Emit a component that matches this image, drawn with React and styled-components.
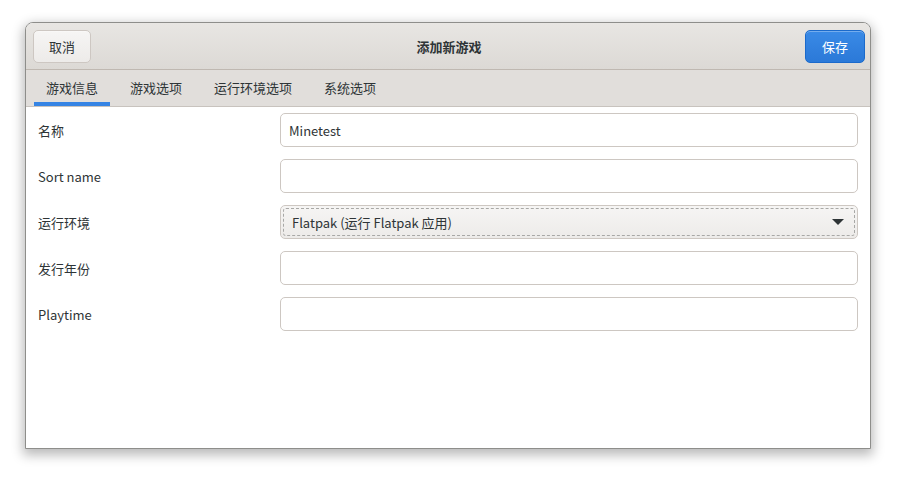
import React from 'react';
import styled, { createGlobalStyle } from 'styled-components';

const Global = createGlobalStyle`
  html, body {
    margin: 0;
    background: #ffffff;
  }
  body {
    font-family: "Noto Sans CJK SC", "Noto Sans", sans-serif;
    font-size: 13px;
    color: #2e3436;
  }
`;

const Page = styled.div`
  width: 897px;
  height: 477px;
  padding: 22px 0 0 25px;
  box-sizing: border-box;
`;

const Window = styled.div`
  width: 846px;
  height: 427px;
  box-sizing: border-box;
  border: 1px solid #8e8e8b;
  border-radius: 8px 8px 0 0;
  background: #ffffff;
  box-shadow: 0 4px 12px 2px rgba(0, 0, 0, 0.28);
  display: flex;
  flex-direction: column;
  overflow: hidden;
`;

const HeaderBar = styled.div`
  height: 47px;
  flex: none;
  box-sizing: border-box;
  display: grid;
  grid-template-columns: 1fr auto 1fr;
  align-items: center;
  padding: 0 5px 0 7px;
  background: linear-gradient(to bottom, #e8e6e3, #dcd9d5);
  border-bottom: 1px solid #bfb8b1;
`;

const Title = styled.div`
  font-weight: bold;
  font-size: 13px;
  color: #2e3436;
`;

const Button = styled.button`
  font-family: inherit;
  font-size: 13px;
  height: 33px;
  padding: 0 ${(p) => (p.$primary ? '16px' : '15px')};
  border-radius: 5px;
  border: 1px solid ${(p) => (p.$primary ? '#1b6acb' : '#cdc7c2')};
  background: ${(p) =>
    p.$primary
      ? 'linear-gradient(to bottom, #3a8ae6, #2b79d8)'
      : 'linear-gradient(to bottom, #f6f5f4, #edebe9)'};
  color: ${(p) => (p.$primary ? '#ffffff' : '#2e3436')};
  box-shadow: inset 0 1px rgba(255, 255, 255, 0.3);
  justify-self: ${(p) => (p.$primary ? 'end' : 'start')};
  margin-top: ${(p) => (p.$primary ? '0' : '1px')};
`;

const TabBar = styled.div`
  height: 37px;
  flex: none;
  box-sizing: border-box;
  display: flex;
  gap: 8px;
  padding: 0 8px;
  background: #e1dedb;
  border-bottom: 1px solid #c8c3be;
`;

const Tab = styled.div`
  padding: 2px 12px 0;
  display: flex;
  align-items: center;
  box-sizing: border-box;
  border-bottom: 4px solid ${(p) => (p.$active ? '#3584e4' : 'transparent')};
  color: #2e3436;
`;

const Form = styled.div`
  display: grid;
  grid-template-columns: 242px 1fr;
  row-gap: 12px;
  padding: 6px 12px 0 12px;
  align-items: center;
`;

const Label = styled.div`
  color: #2e3436;
`;

const Entry = styled.div`
  height: 34px;
  box-sizing: border-box;
  border: 1px solid #cdc7c2;
  border-radius: 5px;
  background: #ffffff;
  display: flex;
  align-items: center;
  padding: 0 8px;
  color: #2e3436;
`;

const Combo = styled.div`
  height: 34px;
  box-sizing: border-box;
  border: 1px solid #cdc7c2;
  border-radius: 5px;
  background: linear-gradient(to bottom, #f6f5f4, #edebe9);
  padding: 2px;
  display: flex;
`;

const ComboInner = styled.div`
  flex: 1;
  border: 1px dashed #a8a8a6;
  border-radius: 3px;
  display: flex;
  align-items: center;
  justify-content: space-between;
  padding: 0 10px 0 8px;
`;

const Arrow = styled.svg`
  width: 12px;
  height: 8px;
`;

const rows = [
  { label: '名称', value: 'Minetest' },
  { label: 'Sort name', value: '' },
  { label: '运行环境', combo: 'Flatpak (运行 Flatpak 应用)' },
  { label: '发行年份', value: '' },
  { label: 'Playtime', value: '' },
];

export default function App() {
  return (
    <Page>
      <Global />
      <Window>
        <HeaderBar>
          <Button>取消</Button>
          <Title>添加新游戏</Title>
          <Button $primary>保存</Button>
        </HeaderBar>
        <TabBar>
          <Tab $active>游戏信息</Tab>
          <Tab>游戏选项</Tab>
          <Tab>运行环境选项</Tab>
          <Tab>系统选项</Tab>
        </TabBar>
        <Form>
          {rows.map((r) => (
            <React.Fragment key={r.label}>
              <Label>{r.label}</Label>
              {r.combo ? (
                <Combo>
                  <ComboInner>
                    <span>{r.combo}</span>
                    <Arrow viewBox="0 0 12 8">
                      <path d="M0 1 L12 1 L6 7 Z" fill="#2e3436" />
                    </Arrow>
                  </ComboInner>
                </Combo>
              ) : (
                <Entry>{r.value}</Entry>
              )}
            </React.Fragment>
          ))}
        </Form>
      </Window>
    </Page>
  );
}
